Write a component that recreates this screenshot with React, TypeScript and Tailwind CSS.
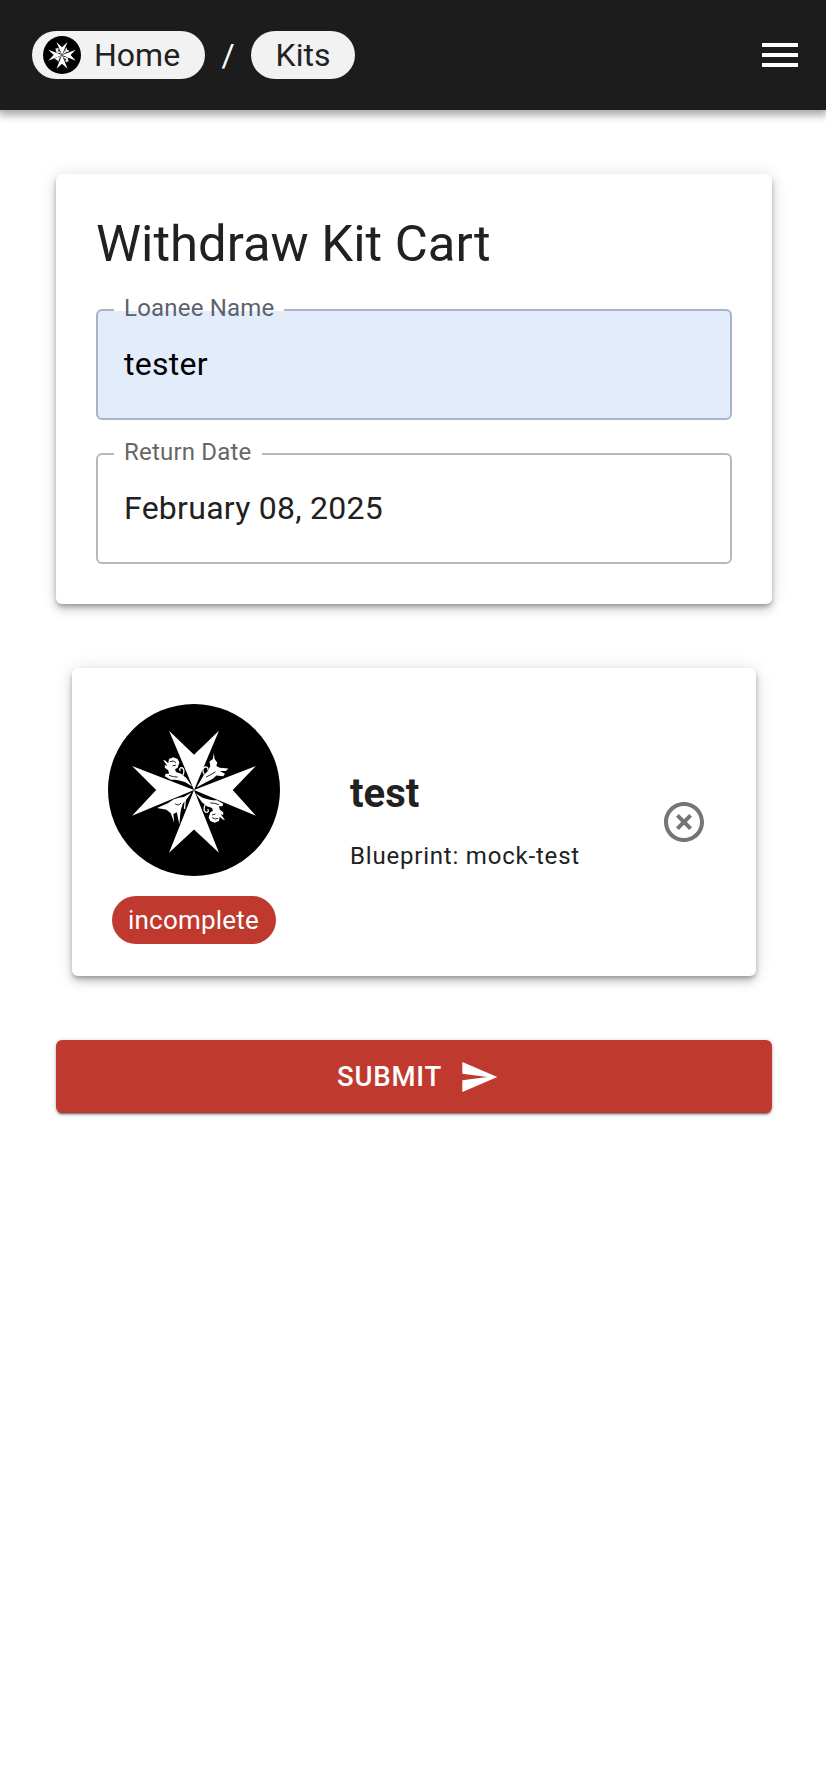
const font = "font-['Roboto',sans-serif]";

function Lion() {
  return (
    <g>
      <path
        fill="#fff"
        d="M-36 -35L-33 -34L-30 -31L-29 -36L-24 -38L-19 -36L-17 -32L-19 -26L-22 -24L-21 -21L-15 -19L-9 -14L-2 -4L-10 -9L-17 -11L-22 -12L-27 -12L-34 -16L-33 -19L-29 -19L-30 -23L-34 -26L-34 -29L-31 -28Z"
      />
      <path fill="none" stroke="#fff" strokeWidth="1.5" d="M-13 -17Q-10 -24 -14 -26Q-18 -26 -16 -22" />
      <path fill="none" stroke="#000" strokeWidth="1" d="M-28 -33Q-24 -35 -21 -32M-25 -28L-21 -29M-29 -17Q-24 -15 -19 -15" />
    </g>
  );
}

function Logo({ className }: { className: string }) {
  return (
    <svg viewBox="-100 -100 200 200" className={className}>
      <circle r="100" fill="#000" />
      <path
        fill="#fff"
        d="M0 0L-29 -69L0 -41L29 -69ZM0 0L72 -28L45 0L72 30ZM0 0L29 73L0 46L-29 73ZM0 0L-72 -28L-44 0L-72 30Z"
      />
      <Lion />
      <g transform="rotate(180)">
        <Lion />
      </g>
      <path
        fill="#fff"
        d="M23 -43L24 -36L27 -32L26 -28L30 -26L40 -25L37 -22L30 -22L36 -19L34 -16L26 -17L22 -13L14 -9L3 -3L7 -10L11 -17L16 -22L19 -28L18 -33L22 -36Z"
      />
      <path fill="none" stroke="#fff" strokeWidth="1.5" d="M12 -18Q8 -25 13 -27Q17 -27 16 -23" />
      <path fill="none" stroke="#000" strokeWidth="1" d="M14 -15Q20 -18 25 -21" />
      <path
        fill="#fff"
        d="M-3 3L-12 8L-18 9L-24 11L-30 15L-43 21L-32 23L-27 27L-23 38L-24 28L-20 26L-17 40L-16 28L-15 22L-13 16L-8 10Z"
      />
      <path fill="none" stroke="#fff" strokeWidth="1.5" d="M-10 10L-11 22" />
      <path fill="none" stroke="#000" strokeWidth="1" d="M-22 16Q-18 19 -15 15" />
    </svg>
  );
}

function Outlined({
  label,
  value,
  gapClass,
  borderClass,
  labelClass,
  textClass,
  bgClass,
}: {
  label: string;
  value: string;
  gapClass: string;
  borderClass: string;
  labelClass: string;
  textClass: string;
  bgClass: string;
}) {
  return (
    <div className={`relative h-[111px] rounded-[6px] border-2 ${borderClass} ${bgClass} flex items-center pl-[26px] pb-[2px]`}>
      <span className={`text-[32px] tracking-[0.27px] leading-none ${textClass}`}>{value}</span>
      <span className={`absolute left-[16px] -top-[2px] h-[2px] bg-white ${gapClass}`} />
      <span className={`absolute left-[26px] -top-[15px] h-[24px] flex items-center text-[24px] tracking-[0.2px] leading-none ${labelClass}`}>
        {label}
      </span>
    </div>
  );
}

export default function App() {
  return (
    <div className={`${font} min-h-[1788px] bg-white`}>
      <header className="h-[110px] bg-[#1c1c1c] flex items-center justify-between pl-[32px] pr-[28px] shadow-[0_3px_8px_2px_rgba(0,0,0,0.35)]">
        <nav className="flex items-center">
          <div className="h-[48px] w-[173px] rounded-full bg-[#f2f2f2] flex items-center pl-[11px] gap-[13px]">
            <Logo className="w-[38px] h-[38px]" />
            <span className="text-[32px] leading-none text-[#212121]">Home</span>
          </div>
          <span className="w-[46px] text-center text-[32px] leading-none text-white">/</span>
          <div className="h-[48px] w-[104px] rounded-full bg-[#f2f2f2] flex items-center justify-center">
            <span className="text-[32px] leading-none text-[#212121]">Kits</span>
          </div>
        </nav>
        <div className="w-[36px] flex flex-col gap-[6px]">
          <div className="h-[4px] bg-white" />
          <div className="h-[4px] bg-white" />
          <div className="h-[4px] bg-white" />
        </div>
      </header>

      <main className="flex flex-col pt-[64px] pl-[56px] pr-[54px]">
        <section className="h-[430px] rounded-[6px] bg-white px-[40px] pt-[37px] shadow-[0_3px_5px_-1px_rgba(0,0,0,0.3),0_6px_10px_0_rgba(0,0,0,0.14),0_1px_18px_0_rgba(0,0,0,0.12)]">
          <h1 className="text-[50.8px] leading-[66px] text-[#212121] font-normal">Withdraw Kit Cart</h1>
          <div className="mt-[32px] flex flex-col gap-[33px]">
            <Outlined
              label="Loanee Name"
              value="tester"
              gapClass="w-[170px]"
              borderClass="border-[#a9b4c8]"
              labelClass="text-[#5a6270]"
              textClass="text-black"
              bgClass="bg-[#e3ecfb]"
            />
            <Outlined
              label="Return Date"
              value="February 08, 2025"
              gapClass="w-[148px]"
              borderClass="border-[#b8b8b8]"
              labelClass="text-[#666666]"
              textClass="text-[#212121]"
              bgClass="bg-white"
            />
          </div>
        </section>

        <section className="mt-[64px] mx-[16px] h-[308px] rounded-[6px] bg-white flex shadow-[0_3px_5px_-1px_rgba(0,0,0,0.3),0_6px_10px_0_rgba(0,0,0,0.14),0_1px_18px_0_rgba(0,0,0,0.12)]">
          <div className="w-[242px] flex flex-col items-center pt-[36px]">
            <Logo className="ml-[1px] w-[172px] h-[172px]" />
            <div className="mt-[20px] ml-[1px] h-[48px] w-[164px] rounded-full bg-[#c0392f] flex items-center justify-center text-[26px] tracking-[0.2px] leading-none text-white">
              incomplete
            </div>
          </div>
          <div className="ml-[36px] w-[310px] pt-[102px]">
            <div className="text-[40px] leading-[48px] font-bold text-[#212121]">test</div>
            <div className="mt-[22px] text-[24px] leading-[32px] tracking-[0.8px] text-[#212121]">Blueprint: mock-test</div>
          </div>
          <div className="pt-[130px]">
            <svg viewBox="0 0 24 24" className="w-[48px] h-[48px]" fill="#757575">
              <path d="M14.59 8L12 10.59 9.41 8 8 9.41 10.59 12 8 14.59 9.41 16 12 13.41 14.59 16 16 14.59 13.41 12 16 9.41 14.59 8zM12 2C6.47 2 2 6.47 2 12s4.47 10 10 10 10-4.47 10-10S17.53 2 12 2zm0 18c-4.41 0-8-3.59-8-8s3.59-8 8-8 8 3.59 8 8-3.59 8-8 8z" />
            </svg>
          </div>
        </section>

        <button className="mt-[64px] h-[73px] rounded-[6px] bg-[#c0392f] pl-[8px] flex items-center justify-center gap-[17px] text-white text-[27.5px] font-medium tracking-[0.8px] shadow-[0_3px_1px_-2px_rgba(0,0,0,0.3),0_2px_2px_0_rgba(0,0,0,0.2),0_1px_5px_0_rgba(0,0,0,0.2)]">
          SUBMIT
          <svg viewBox="0 0 24 24" className="w-[40px] h-[40px]" fill="#fff">
            <path d="M2.01 21L23 12 2.01 3 2 10l15 2-15 2z" />
          </svg>
        </button>
      </main>
    </div>
  );
}
